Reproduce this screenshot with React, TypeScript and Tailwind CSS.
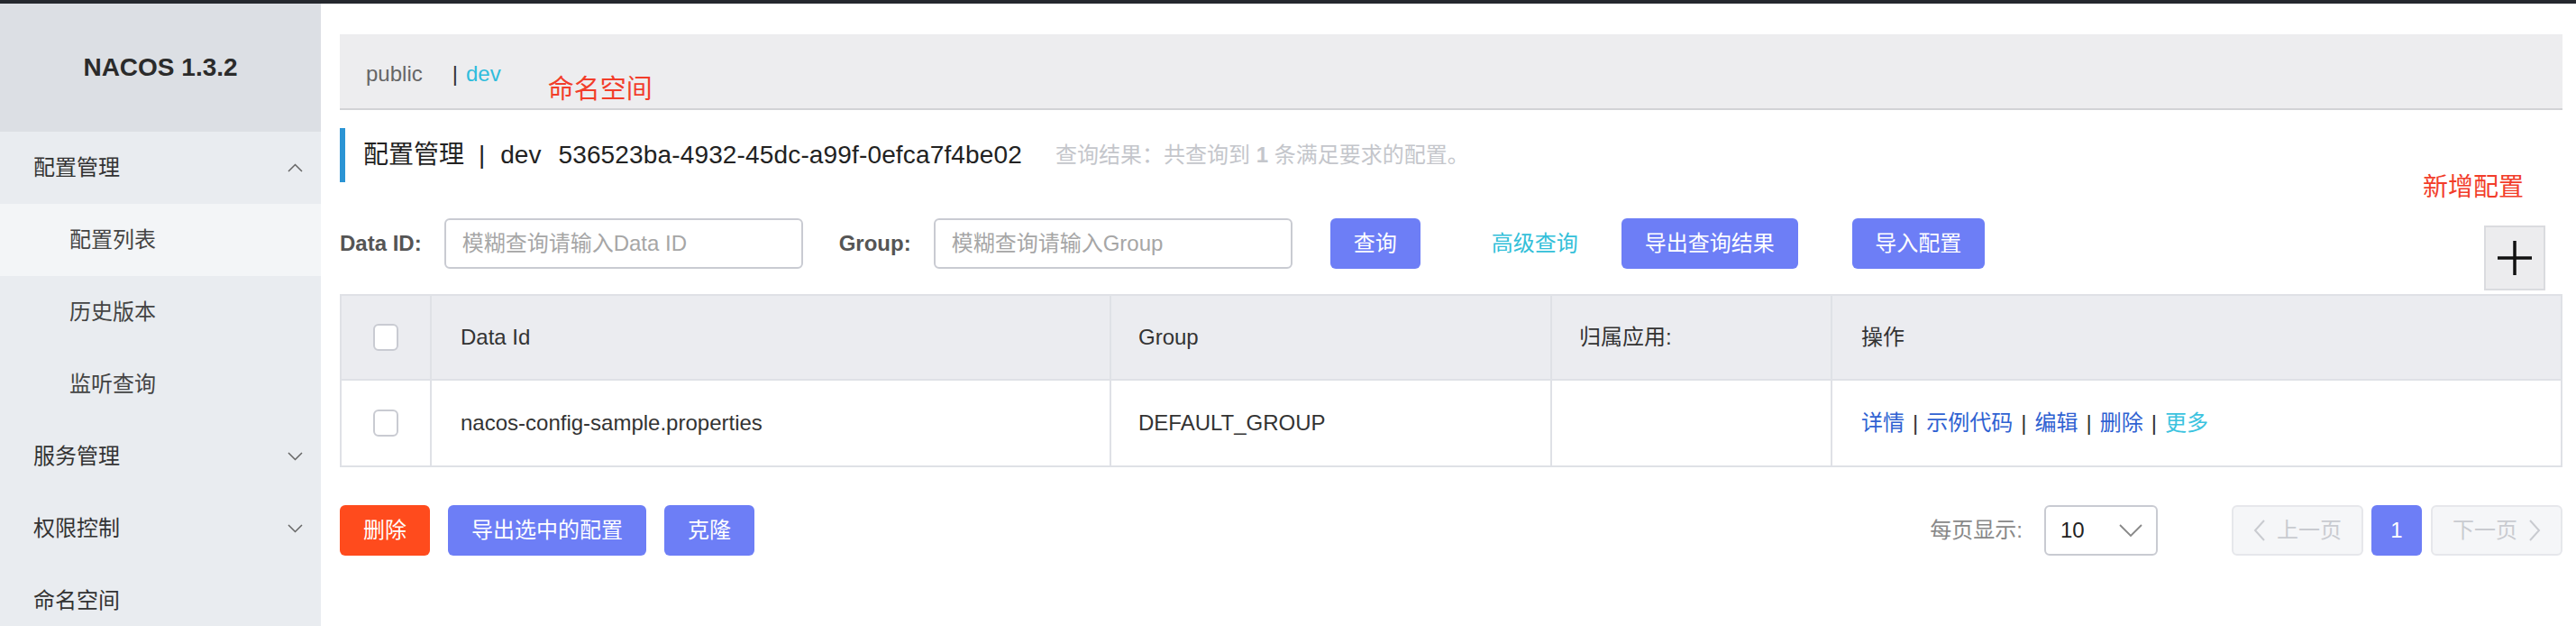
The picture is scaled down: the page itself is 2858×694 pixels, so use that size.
import React from "react";

const FONT = "font-['Liberation_Sans','Noto_Sans_CJK_SC',sans-serif]";

function Chevron({ up }: { up?: boolean }) {
  return (
    <svg width="17" height="10" viewBox="0 0 17 10" fill="none">
      <polyline
        points={up ? "1,9 8.5,1.5 16,9" : "1,1 8.5,8.5 16,1"}
        stroke="#666"
        strokeWidth="1.5"
      />
    </svg>
  );
}

function MenuItem({
  label,
  sub,
  active,
  chevron,
}: {
  label: string;
  sub?: boolean;
  active?: boolean;
  chevron?: "up" | "down";
}) {
  return (
    <div
      className={`h-[80px] shrink-0 flex items-center justify-between pr-[20px] text-[24px] ${
        sub ? "pl-[77px] text-[#444]" : "pl-[37px] text-[#333]"
      } ${active ? "bg-[#f3f5f7]" : ""}`}
    >
      <span>{label}</span>
      {chevron && <Chevron up={chevron === "up"} />}
    </div>
  );
}

function Checkbox() {
  return <div className="w-[28px] h-[30px] rounded-[6px] border-2 border-[#c9cbd2] bg-white" />;
}

function PageChevron({ left }: { left?: boolean }) {
  return (
    <svg width="14" height="26" viewBox="0 0 14 26" fill="none">
      <polyline
        points={left ? "12,2 2,13 12,24" : "2,2 12,13 2,24"}
        stroke="#c9cbd0"
        strokeWidth="2"
      />
    </svg>
  );
}

export default function App() {
  const cols = "grid grid-cols-[98px_754px_489px_311px_810px]";
  return (
    <div className={`w-[2858px] h-[694px] overflow-hidden flex flex-col bg-white ${FONT}`}>
      <div className="h-[4px] bg-[#25282e] shrink-0" />
      <div className="flex flex-1 min-h-0">
        {/* Sidebar */}
        <aside className="w-[356px] shrink-0 bg-[#e9ecf0] flex flex-col overflow-hidden">
          <div className="h-[142px] shrink-0 bg-[#dcdfe4] flex items-center justify-center text-[28px] font-bold text-[#2b2b2b]">
            NACOS 1.3.2
          </div>
          <MenuItem label="配置管理" chevron="up" />
          <MenuItem label="配置列表" sub active />
          <MenuItem label="历史版本" sub />
          <MenuItem label="监听查询" sub />
          <MenuItem label="服务管理" chevron="down" />
          <MenuItem label="权限控制" chevron="down" />
          <MenuItem label="命名空间" />
        </aside>

        {/* Main */}
        <main className="flex-1 pl-[21px] pr-[15px] pt-[34px] relative">
          {/* Namespace bar */}
          <div className="h-[84px] bg-[#ededef] border-b-2 border-[#d2d3d6] flex items-start pl-[29px] pt-[26px] text-[24px]">
            <span className="text-[#666]">public</span>
            <span className="ml-[33px] text-[#333]">|</span>
            <span className="ml-[9px] text-[#2fbcdc]">dev</span>
            <span className="ml-[52px] mt-[14px] text-[29px] text-[#f23d2a]">命名空间</span>
          </div>

          {/* Title */}
          <div className="mt-[20px] h-[60px] border-l-[6px] border-[#2b94d4] pl-[20px] flex items-center text-[28px] text-[#222]">
            <span>配置管理</span>
            <span className="ml-[16px]">|</span>
            <span className="ml-[17px]">dev</span>
            <span className="ml-[19px] tracking-[0.15px]">536523ba-4932-45dc-a99f-0efca7f4be02</span>
            <span className="ml-[37px] text-[24px] text-[#c4c6cb]">
              查询结果：共查询到 <b className="font-bold">1</b> 条满足要求的配置。
            </span>
          </div>

          {/* annotation */}
          <div className="absolute left-[2332px] top-[183px] text-[28px] text-[#f23d2a]">新增配置</div>

          {/* Search row */}
          <div className="mt-[40px] flex items-start">
            <div className="h-[56px] flex items-center text-[24px] font-bold text-[#555]">Data ID:</div>
            <div className="ml-[25px] w-[398px] h-[56px] rounded-[6px] border-2 border-[#c9cbd2] flex items-center pl-[18px] text-[24px] text-[#a6a6a6]">
              模糊查询请输入Data ID
            </div>
            <div className="ml-[40px] h-[56px] flex items-center text-[24px] font-bold text-[#555]">Group:</div>
            <div className="ml-[25px] w-[398px] h-[56px] rounded-[6px] border-2 border-[#c9cbd2] flex items-center pl-[18px] text-[24px] text-[#a6a6a6]">
              模糊查询请输入Group
            </div>
            <div className="ml-[42px] w-[100px] h-[56px] rounded-[6px] bg-[#6d7ef6] text-white text-[24px] flex items-center justify-center">
              查询
            </div>
            <div className="ml-[79px] h-[56px] flex items-center text-[24px] text-[#33bfd9]">高级查询</div>
            <div className="ml-[48px] w-[196px] h-[56px] rounded-[6px] bg-[#6d7ef6] text-white text-[24px] flex items-center justify-center">
              导出查询结果
            </div>
            <div className="ml-[60px] w-[147px] h-[56px] rounded-[6px] bg-[#6d7ef6] text-white text-[24px] flex items-center justify-center">
              导入配置
            </div>
            <div className="ml-auto mr-[19px] mt-[8px] w-[68px] h-[72px] bg-[#ececee] border-2 border-[#dadbdf] flex items-center justify-center">
              <svg width="40" height="40" viewBox="0 0 40 40">
                <line x1="20" y1="1" x2="20" y2="39" stroke="#111" strokeWidth="3.5" />
                <line x1="1" y1="20" x2="39" y2="20" stroke="#111" strokeWidth="3.5" />
              </svg>
            </div>
          </div>

          {/* Table */}
          <div className="mt-[4px] border-2 border-[#dfe1e6] text-[24px] text-[#333]">
            <div className={`${cols} h-[94px] bg-[#ebecf0] border-b-2 border-[#dfe1e6]`}>
              <div className="flex items-center justify-center"><Checkbox /></div>
              <div className="border-l-2 border-[#dfe1e6] flex items-center pl-[32px]">Data Id</div>
              <div className="border-l-2 border-[#dfe1e6] flex items-center pl-[30px]">Group</div>
              <div className="border-l-2 border-[#dfe1e6] flex items-center pl-[30px]">归属应用:</div>
              <div className="border-l-2 border-[#dfe1e6] flex items-center pl-[32px]">操作</div>
            </div>
            <div className={`${cols} h-[94px] bg-white`}>
              <div className="flex items-center justify-center"><Checkbox /></div>
              <div className="border-l-2 border-[#dfe1e6] flex items-center pl-[32px]">nacos-config-sample.properties</div>
              <div className="border-l-2 border-[#dfe1e6] flex items-center pl-[30px]">DEFAULT_GROUP</div>
              <div className="border-l-2 border-[#dfe1e6]" />
              <div className="border-l-2 border-[#dfe1e6] flex items-center pl-[32px] gap-[9px]">
                <span className="text-[#2f62d2]">详情</span>
                <span className="text-[#333]">|</span>
                <span className="text-[#2f62d2]">示例代码</span>
                <span className="text-[#333]">|</span>
                <span className="text-[#2f62d2]">编辑</span>
                <span className="text-[#333]">|</span>
                <span className="text-[#2f62d2]">删除</span>
                <span className="text-[#333]">|</span>
                <span className="text-[#3bc3df]">更多</span>
              </div>
            </div>
          </div>

          {/* Bottom */}
          <div className="mt-[42px] flex items-center text-[24px]">
            <div className="w-[100px] h-[56px] rounded-[6px] bg-[#ff4b1d] text-white flex items-center justify-center">删除</div>
            <div className="ml-[20px] w-[220px] h-[56px] rounded-[6px] bg-[#6d7ef6] text-white flex items-center justify-center">导出选中的配置</div>
            <div className="ml-[20px] w-[100px] h-[56px] rounded-[6px] bg-[#6d7ef6] text-white flex items-center justify-center">克隆</div>

            <div className="ml-auto flex items-center">
              <span className="text-[#888]">每页显示:</span>
              <div className="ml-[24px] w-[126px] h-[56px] rounded-[6px] border-2 border-[#c9cbd2] flex items-center justify-between pl-[16px] pr-[14px]">
                <span className="text-[#222]">10</span>
                <svg width="28" height="16" viewBox="0 0 28 16" fill="none">
                  <polyline points="2,2 14,14 26,2" stroke="#888" strokeWidth="1.8" />
                </svg>
              </div>
              <div className="ml-[82px] w-[146px] h-[56px] rounded-[6px] border-2 border-[#e6e7eb] bg-[#f5f6f8] text-[#c9cbd0] flex items-center justify-center gap-[12px]">
                <PageChevron left />
                <span>上一页</span>
              </div>
              <div className="ml-[9px] w-[56px] h-[56px] rounded-[6px] bg-[#6d7ef6] text-white flex items-center justify-center">1</div>
              <div className="ml-[10px] w-[146px] h-[56px] rounded-[6px] border-2 border-[#e6e7eb] bg-[#f5f6f8] text-[#c9cbd0] flex items-center justify-center gap-[12px]">
                <span>下一页</span>
                <PageChevron />
              </div>
            </div>
          </div>
        </main>
      </div>
    </div>
  );
}
